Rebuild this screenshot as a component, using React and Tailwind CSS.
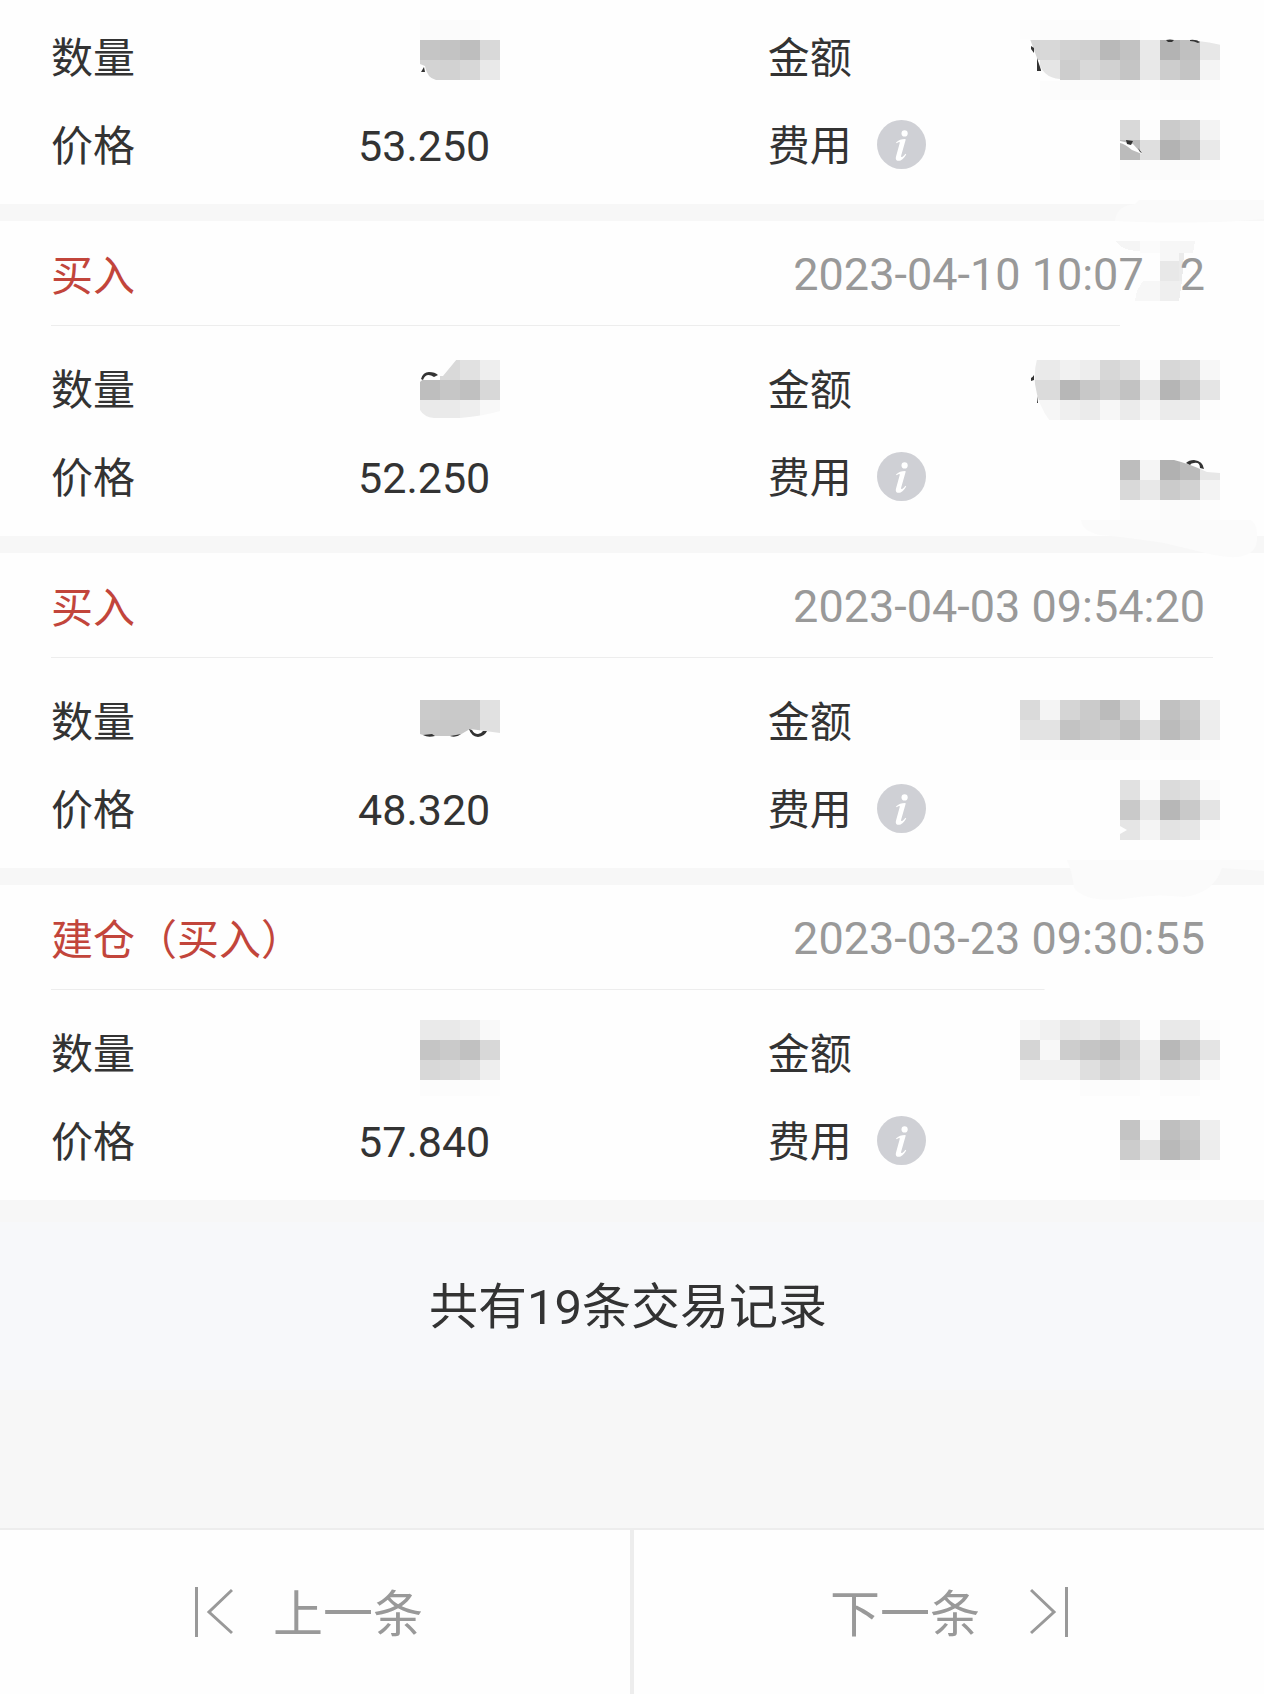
import React from 'react';

const PAPER = '#fefefe';
const INK = '#333333';

// Pixelated amounts: each row is { y, x, cells }, cells are 20px grey levels
const records = [
  {
    id: 1,
    price: '53.250',
    qty: {
      rows: [
        { y: 8, cells: ['fb', 'fb', 'fb', 'fd'] },
        { y: 28, cells: ['c5', 'c3', 'be', 'd9'] },
        { y: 48, cells: ['d3', 'd2', 'd7', 'e9'] },
      ],
      erase: ['M0 52 L5 54 Q7 66 16 68 L0 69 Z'],
      ink: ['M1 60 L4 55 L5 60 Z'],
    },
    amount: {
      rows: [
        { y: 8, cells: ['fd', 'fc', 'fc', 'fc', 'fb', 'fc', 'fe', 'fe', 'fe', 'fe'] },
        { y: 28, cells: ['d5', 'd8', 'd2', 'd0', 'b9', 'c2', 'e9', 'b3', 'c0', 'e7'] },
        { y: 48, cells: ['fe', 'e5', 'cd', 'd9', 'd1', 'c5', 'e8', 'cd', 'c4', 'f4'] },
        { y: 68, cells: ['fe', 'fc', 'fb', 'fb', 'fb', 'fb', 'fd', 'fb', 'fb', 'fd'] },
      ],
      erase: ['M0 27 H10 Q14 38 17 46 Q22 66 40 67 V69 H0 Z', 'M178 27 H201 V33 Q190 30 178 29 Z'],
      ink: ['M11 34 L14 36 V41 L11 37 Z', 'M17 46 L21 58 V59 H17 Z', 'M146 28 Q150 27 154 28 L152 30 H148 Z', 'M170 28 Q175 27 180 30 L178 31 Q174 29 170 29 Z'],
    },
    fee: {
      rows: [
        { y: 20, x: 100, cells: ['d9', 'fd', 'cb', 'd2', 'f3'] },
        { y: 40, x: 100, cells: ['bb', 'df', 'b3', 'c0', 'e9'] },
        { y: 60, x: 100, cells: ['fb', 'fc', 'fb', 'fb', 'fd'] },
      ],
      erase: ['M100 41 L113 44 L122 54 L112 50 Q105 44 100 43 Z'],
      ink: ['M106 40 L113 41 L111 45 L107 44 Z', 'M118 48 L122 53 L120 52 Z'],
    },
    smudge: 'M71 204 Q52 206 51 221 Q140 225 200 219 V200 H75 Z',
    smudgeFill: '#fafafa',
  },
  {
    id: 2,
    type: '买入',
    time: '2023-04-10 10:07',
    hidden: true,
    timeEnd: '2',
    price: '52.250',
    qty: {
      rows: [
        { y: 16, cells: ['fe', 'd9', 'e1', 'ee'] },
        { y: 36, cells: ['be', 'c6', 'c0', 'd8'] },
        { y: 56, cells: ['ea', 'ea', 'ee', 'f8'] },
      ],
      erase: ['M0 15 H37 L23 32 H10 Q4 34 0 38 Z', 'M0 66 Q4 73 14 74 H40 Q64 72 80 67 V77 H0 Z'],
      ink: ['M1 35 Q3 28 9 28 Q15 28 18 31 L14 33 Q6 28 3 36 Z'],
    },
    amount: {
      rows: [
        { y: 16, cells: ['ec', 'ea', 'f1', 'ed', 'd7', 'de', 'fc', 'd7', 'db', 'f7'] },
        { y: 36, cells: ['db', 'db', 'b7', 'c8', 'd1', 'c2', 'e6', 'b5', 'c7', 'e5'] },
        { y: 56, cells: ['f6', 'f6', 'ef', 'eb', 'f7', 'eb', 'f7', 'eb', 'eb', 'fd'] },
      ],
      erase: ['M-1 15 H17 Q14 26 15 40 Q18 62 30 77 H-1 Z'],
      ink: ['M11 34 Q13 33 14 31 V36 L11 37 Z', 'M17 52 L18 59 H17 Z'],
    },
    fee: {
      rows: [
        { y: 8, x: 100, cells: ['fd', 'fe', 'fe', 'fe', 'fe'] },
        { y: 28, x: 100, cells: ['bd', 'f5', 'b1', 'bb', 'e7'] },
        { y: 48, x: 100, cells: ['d9', 'e8', 'cb', 'd2', 'f3'] },
        { y: 68, x: 100, cells: ['fc', 'fd', 'fb', 'fb', 'fd'] },
      ],
      erase: ['M154 27 H201 V41 L187 40 Q170 32 154 28 Z'],
      ink: ['M166 31 Q169 28 174 28 Q183 29 184 37 L180 36 Q180 30 174 31 Q171 31 170 33 Z'],
    },
    smudge: 'M17 299 Q18 310 36 314 Q60 316 100 322 L150 334 Q190 342 193 320 Q194 302 186 299 Z',
    smudgeFill: '#fbfbfb',
    erase: 'M56 100 H160 V110 H56 Z',
  },
  {
    id: 3,
    type: '买入',
    time: '2023-04-03 09:54:20',
    price: '48.320',
    qty: {
      rows: [
        { y: 24, cells: ['cb', 'c9', 'c9', 'e1'] },
        { y: 44, cells: ['c8', 'c8', 'c8', 'e0'] },
      ],
      erase: ['M0 58 L6 60 H38 L50 53 L80 57 V65 H0 Z'],
      ink: ['M3 59 Q8 62 15 60 L12 58 Z', 'M30 60 Q36 62 41 58 L36 59 Z', 'M49 53 Q51 60 58 61 Q65 60 67 55 L63 55 Q61 58 58 58 Q54 58 52 54 Z'],
    },
    amount: {
      rows: [
        { y: 24, cells: ['da', 'f4', 'd5', 'cb', 'bb', 'd3', 'fc', 'c1', 'ca', 'ee'] },
        { y: 44, cells: ['e2', 'e3', 'c3', 'c9', 'cc', 'c1', 'df', 'bb', 'c6', 'ed'] },
        { y: 64, cells: ['fc', 'fc', 'fb', 'fb', 'fb', 'fb', 'fd', 'fb', 'fb', 'fd'] },
      ],
    },
    fee: {
      rows: [
        { y: 16, x: 100, cells: ['e1', 'fb', 'db', 'df', 'fa'] },
        { y: 36, x: 100, cells: ['c9', 'e8', 'b7', 'c9', 'e4'] },
        { y: 56, x: 100, cells: ['e5', 'f4', 'e3', 'e6', 'fc'] },
      ],
      erase: ['M100 62 L107 66 L100 70 Z'],
    },
    smudge: 'M3 307 Q8 318 10 335 Q22 350 60 346 Q90 340 120 344 Q150 340 158 315 L200 318 V307 Z',
    smudgeFill: '#fbfbfb',
  },
  {
    id: 4,
    type: '建仓（买入）',
    time: '2023-03-23 09:30:55',
    price: '57.840',
    qty: {
      rows: [
        { y: 12, cells: ['ea', 'e9', 'ed', 'f9'] },
        { y: 32, cells: ['c5', 'ca', 'c1', 'd8'] },
        { y: 52, cells: ['d8', 'da', 'df', 'ee'] },
        { y: 72, cells: ['fc', 'fc', 'fc', 'fd'] },
      ],
    },
    amount: {
      rows: [
        { y: 12, cells: ['f6', 'f1', 'e7', 'ea', 'e1', 'e8', 'fd', 'e9', 'e9', 'fc'] },
        { y: 32, cells: ['d5', 'f8', 'cd', 'c5', 'bf', 'd5', 'ee', 'b8', 'c9', 'e4'] },
        { y: 52, cells: ['f0', 'f0', 'f0', 'df', 'd3', 'd9', 'ec', 'd5', 'd9', 'f7'] },
        { y: 72, cells: ['fe', 'fe', 'fe', 'fc', 'fc', 'fc', 'fe', 'fc', 'fc', 'fe'] },
      ],
    },
    fee: {
      rows: [
        { y: 24, x: 100, cells: ['c4', 'fa', 'bf', 'c8', 'ee'] },
        { y: 44, x: 100, cells: ['cc', 'e3', 'b9', 'c4', 'ed'] },
        { y: 64, x: 100, cells: ['fc', 'fd', 'fc', 'fc', 'fe'] },
      ],
    },
    erase: 'M-18 103 H160 V107 H-22 Z',
  },
];

const Mosaic = ({ data, width, className }) => (
  <svg width={width} height="88" viewBox={`0 0 ${width} 88`} shapeRendering="crispEdges" className={`shrink-0 ${className}`} aria-hidden="true">
    {data.rows.map((row) => row.cells.map((c, i) => (
      <rect key={`${row.y}-${i}`} x={(row.x || 0) + i * 20} y={row.y} width="20" height="20" fill={`#${c}${c}${c}`} />
    )))}
    <g shapeRendering="geometricPrecision">
      {(data.erase || []).map((d) => <path key={d} d={d} fill={PAPER} />)}
      {(data.ink || []).map((d) => <path key={d} d={d} fill={INK} />)}
    </g>
  </svg>
);

const InfoIcon = () => (
  <svg width="49" height="49" viewBox="0 0 49 49" aria-hidden="true">
    <circle cx="24.5" cy="24.5" r="24.5" fill="#cfd0d5" />
    <circle cx="27.6" cy="13.4" r="3.1" fill="#fff" />
    <path
      d="M19 22.6 C21.5 20 24.5 19 28.2 19 C28.6 19 28.7 19.4 28.6 19.9 L24.2 35.6 C23.8 37.2 24.6 37.4 25.5 36.8 C26.6 36 27.4 35 28.4 33.8 L29.2 34.4 C27.2 37.8 24.6 40.8 21.4 40.8 C18.9 40.8 18.4 38.8 19.1 36.2 L22.6 23.6 C23 22.1 22.4 21.9 21.5 22.2 C20.8 22.4 20.2 22.8 19.5 23.3 Z"
      fill="#fff"
    />
  </svg>
);

const HiddenSeconds = () => (
  <svg width="36" height="64" viewBox="0 0 36 64" shapeRendering="crispEdges" className="overflow-visible" aria-hidden="true">
    <path d="M-28 0 H-4 V10 Q-22 10 -28 0 Z" fill="#f5f5f5" />
    <rect x="-4" y="0" width="20" height="12" fill="#fbfbfb" />
    <rect x="16" y="0" width="20" height="20" fill="#f7f7f7" />
    <path d="M36 0 H51 L49 12 H36 Z" fill="#f6f6f6" />
    <rect x="16" y="20" width="20" height="20" fill="#e8e8e8" />
    <path d="M35 12 H40 L38 40 H35 Z" fill="#ebebeb" />
    <path d="M-1 40 H16 V60 H-9 L-7 50 Z" fill="#f7f7f7" />
    <path d="M16 40 H38 L35 60 H16 Z" fill="#efefef" />
  </svg>
);

const Record = ({ record }) => (
  <li className="relative bg-[#fefefe]">
    {record.type && (
      <div className="pl-[51px] pr-[51px]">
        <div className="flex h-[104px] items-center justify-between pr-2">
          <h2 className="pt-1.5 text-[42px] text-[#c2453b]">{record.type}</h2>
          <p className="flex items-center text-[45px] text-[#999999]">
            <span className="pt-1">{record.time}</span>
            {record.hidden && <HiddenSeconds />}
            {record.timeEnd && <span className="pt-1">{record.timeEnd}</span>}
          </p>
        </div>
        <div className="h-px bg-[#ededed]" />
      </div>
    )}
    <dl className={`grid grid-cols-[38fr_24fr_38fr] pl-[51px] pr-[57px] pb-4 text-[#333333] ${record.type ? 'pt-[18px]' : 'pt-3'}`}>
      <div className="flex h-[88px] items-center justify-between">
        <dt className="pt-1 text-[42px]">数量</dt>
        <dd><Mosaic data={record.qty} width={80} className="-mr-[10px]" /></dd>
      </div>
      <div className="col-start-3 flex h-[88px] items-center justify-between">
        <dt className="pt-1 text-[42px]">金额</dt>
        <dd><Mosaic data={record.amount} width={200} className="-mr-[13px]" /></dd>
      </div>
      <div className="col-start-1 flex h-[88px] items-center justify-between">
        <dt className="pt-1 text-[42px]">价格</dt>
        <dd className="pt-1 text-[43px]">{record.price}</dd>
      </div>
      <div className="col-start-3 flex h-[88px] items-center">
        <dt className="flex items-center gap-[25px] text-[42px]">
          <span className="pt-1">费用</span>
          <button type="button" aria-label="费用"><InfoIcon /></button>
        </dt>
        <dd className="ml-auto"><Mosaic data={record.fee} width={200} className="-ml-[100px] -mr-[13px]" /></dd>
      </div>
    </dl>
    {/* soft brush marks running over the rule and the gap below */}
    <svg width="200" height="350" viewBox="0 0 200 350" className="pointer-events-none absolute right-0 top-0 z-10 overflow-visible" aria-hidden="true">
      {record.erase && <path d={record.erase} fill={PAPER} />}
      {record.smudge && <path d={record.smudge} fill={record.smudgeFill} />}
    </svg>
  </li>
);

export default function App() {
  return (
    <div className="flex min-h-screen flex-col overflow-x-hidden bg-[#f7f7f7] font-[Roboto,'Noto_Sans_CJK_SC',sans-serif]">
      <ul className="flex flex-col gap-[17px]">
        {records.map((record) => <Record key={record.id} record={record} />)}
      </ul>

      <div className="mt-[22px] flex h-[168px] items-center justify-center bg-[#f7f8fa] pr-2">
        <p className="pt-1 text-[49px] text-[#333333]">共有19条交易记录</p>
      </div>

      <nav className="mt-auto grid h-[166px] grid-cols-[1fr_4px_1fr] border-t-2 border-[#ededed] bg-[#fefefe] text-[50px] text-[#999999]">
        <button type="button" className="flex items-center justify-center gap-10 pr-3">
          <svg width="38" height="50" viewBox="0 0 38 50" fill="none" stroke="currentColor" strokeWidth="3" aria-hidden="true">
            <path d="M1.5 0 V50 M37 3 L14 25 L37 46" />
          </svg>
          <span className="pt-1.5">上一条</span>
        </button>
        <div className="bg-[#ededed]" />
        <button type="button" className="flex items-center justify-center gap-[50px]">
          <span className="pt-1.5">下一条</span>
          <svg width="38" height="50" viewBox="0 0 38 50" fill="none" stroke="currentColor" strokeWidth="3" aria-hidden="true">
            <path d="M36.5 0 V50 M1 3 L24 25 L1 46" />
          </svg>
        </button>
      </nav>
    </div>
  );
}
